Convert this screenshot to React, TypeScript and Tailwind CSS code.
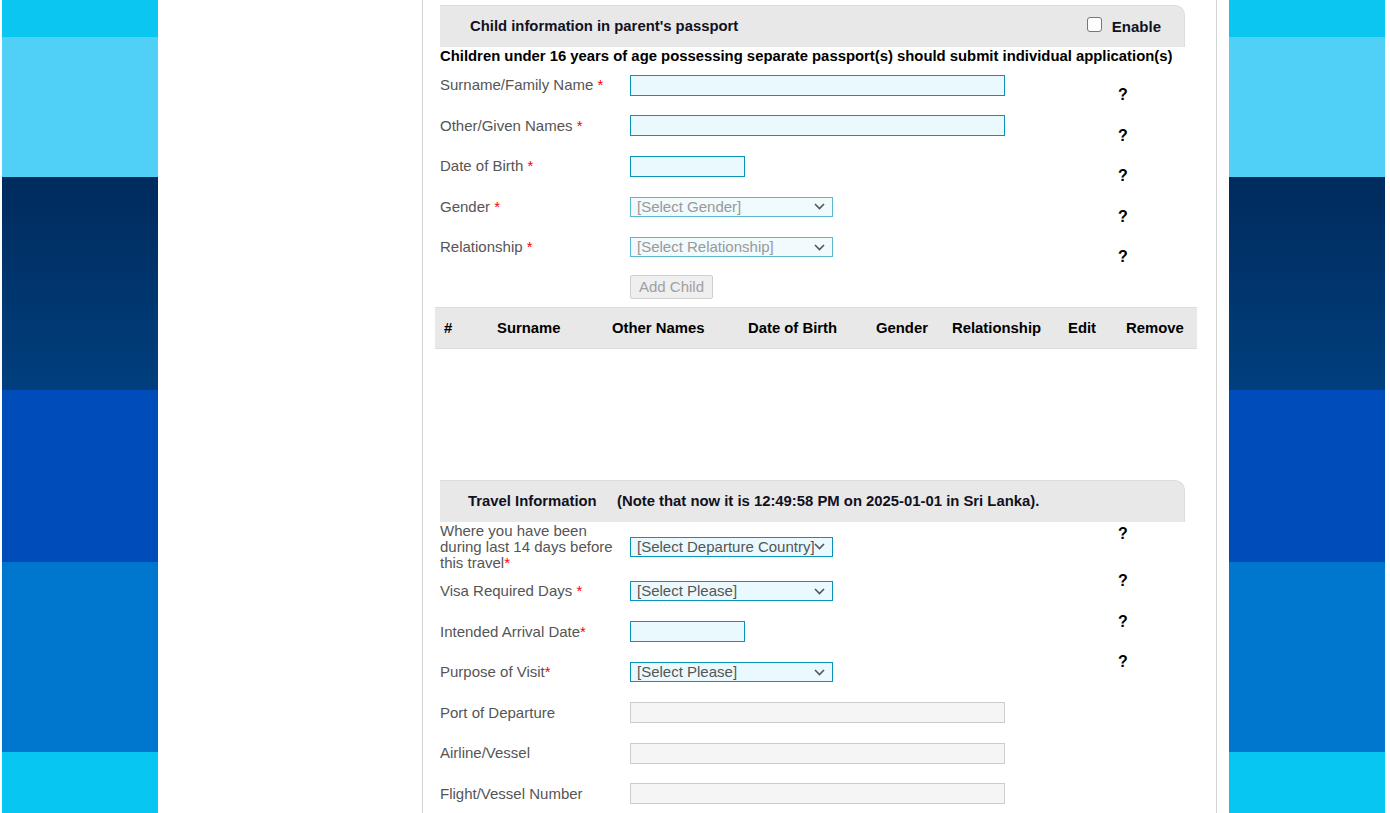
import React from "react";

const Star = () => <span className="text-[#ff0000]">*</span>;

const Chevron = () => (
  <svg width="11" height="7" viewBox="0 0 11 7" className="shrink-0">
    <polyline points="1,1 5.5,5.5 10,1" fill="none" stroke="#555" strokeWidth="1.6" />
  </svg>
);

const TextBox = ({ w = "w-[375px]" }: { w?: string }) => (
  <div className={`${w} h-[21px] border border-[#0a93b8] bg-[#eaf9fd]`} />
);

const GrayBox = () => (
  <div className="w-[375px] h-[21px] border border-[#cccccc] bg-[#f5f5f5]" />
);

const Select = ({ text, dim }: { text: string; dim?: boolean }) => (
  <div
    className={`w-[203px] h-[20px] flex items-center pl-[6px] pr-[7px] overflow-hidden ${
      dim ? "border border-[#5bb8d3] bg-[#f1fafd] text-[#999999]" : "border border-[#0a93b8] bg-[#eaf9fd] text-[#555555]"
    }`}
  >
    <span className="flex-1 min-w-0 whitespace-nowrap overflow-hidden leading-[18px] text-[15px]">{text}</span>
    <Chevron />
  </div>
);

const Help = ({ cls }: { cls: string }) => (
  <span className={`font-bold text-black text-[16px] leading-none ${cls}`}>?</span>
);

const Row = ({
  label,
  control,
  help,
  helpCls = "",
  h = "h-[40.5px]",
}: {
  label: React.ReactNode;
  control: React.ReactNode;
  help?: boolean;
  helpCls?: string;
  h?: string;
}) => (
  <div className={`flex items-center ${h}`}>
    <div className="w-[190px] text-[#555555] text-[15px] leading-[16px] pr-[14px]">{label}</div>
    <div className="w-[488px] flex items-center">{control}</div>
    {help && <Help cls={helpCls} />}
  </div>
);

const Stripe = () => (
  <div className="w-[156px] h-full flex flex-col shrink-0">
    <div className="h-[37px] bg-[#0ac6f1]" />
    <div className="h-[140px] bg-[#50d0f7]" />
    <div className="h-[213px] bg-gradient-to-b from-[#002b5d] to-[#003f7e]" />
    <div className="h-[172px] bg-[#004cbb]" />
    <div className="h-[190px] bg-[#0077cf]" />
    <div className="flex-1 bg-[#08c6f2]" />
  </div>
);

const cols = ["#", "Surname", "Other Names", "Date of Birth", "Gender", "Relationship", "Edit", "Remove"];

export default function App() {
  return (
    <div className="h-[813px] overflow-hidden bg-white flex font-['Liberation_Sans',Arial,sans-serif]">
      <div className="w-[2px] shrink-0" />
      <Stripe />
      <div className="w-[1071px] shrink-0 pl-[264px]">
        <div className="w-[795px] h-full border-x border-[#d3d3d3] pt-[5px]">
          {/* child section */}
          <div className="ml-[17px] w-[745px] h-[42px] bg-[#e8e8e8] border-t border-r border-[#dddddd] rounded-tr-[10px] flex items-center justify-between pl-[30px] pr-[23px]">
            <span className="font-bold text-[14.85px] text-[#111122]">Child information in parent's passport</span>
            <span className="flex items-center gap-[10px] mt-[2px]">
              <span className="w-[15px] h-[15px] rounded-[3px] border border-[#767676] bg-white -mt-[6px]" />
              <span className="font-bold text-[15px] text-[#111122]">Enable</span>
            </span>
          </div>
          <div className="ml-[17px] h-[18px] pt-[1px] font-bold text-[14.85px] leading-[17px] text-black whitespace-nowrap">
            Children under 16 years of age possessing separate passport(s) should submit individual application(s)
          </div>
          <div className="ml-[17px]">
            <Row label={<>Surname/Family Name <Star /></>} control={<TextBox />} help helpCls="mt-[20px]" />
            <Row label={<>Other/Given Names <Star /></>} control={<TextBox />} help helpCls="mt-[20px]" />
            <Row label={<>Date of Birth <Star /></>} control={<TextBox w="w-[115px]" />} help helpCls="mt-[20px]" />
            <Row label={<>Gender <Star /></>} control={<Select text="[Select Gender]" dim />} help helpCls="mt-[20px]" />
            <Row label={<>Relationship <Star /></>} control={<Select text="[Select Relationship]" dim />} help helpCls="mt-[20px]" />
            <Row
              h="h-[39.5px]"
              label=""
              control={
                <button className="w-[83px] h-[24px] border border-[#cfcfcf] rounded-[2px] bg-[#efefef] text-[#a0a0a0] text-[15px]">
                  Add Child
                </button>
              }
            />
          </div>
          <div className="ml-[12px] w-[762px] h-[42px] bg-[#e8e8e8] border-y border-[#dddddd] grid grid-cols-[53px_115px_136px_128px_76px_116px_58px_1fr] items-center pl-[9px]">
            {cols.map((c) => (
              <span key={c} className="font-bold text-[14.85px] text-black whitespace-nowrap">
                {c}
              </span>
            ))}
          </div>
          <div className="h-[131px]" />
          {/* travel section */}
          <div className="ml-[17px] w-[745px] h-[42px] bg-[#e8e8e8] border-t border-r border-[#dddddd] rounded-tr-[10px] flex items-center pl-[28px]">
            <span className="font-bold text-[14.85px] text-[#111122] w-[149px]">Travel Information</span>
            <span className="font-bold text-[14.85px] text-[#111122]">
              (Note that now it is 12:49:58 PM on 2025-01-01 in Sri Lanka).
            </span>
          </div>
          <div className="ml-[17px]">
            <Row
              h="h-[49px]"
              label={<>Where you have been during last 14 days before this travel<Star /></>}
              control={<Select text="[Select Departure Country]" />}
              help
              helpCls="self-start mt-[4px]"
            />
            <Row label={<>Visa Required Days <Star /></>} control={<Select text="[Select Please]" />} help helpCls="mb-[20px]" />
            <Row label={<>Intended Arrival Date<Star /></>} control={<TextBox w="w-[115px]" />} help helpCls="mb-[20px]" />
            <Row label={<>Purpose of Visit<Star /></>} control={<Select text="[Select Please]" />} help helpCls="mb-[20px]" />
            <Row label="Port of Departure" control={<GrayBox />} />
            <Row label="Airline/Vessel" control={<GrayBox />} />
            <Row label="Flight/Vessel Number" control={<GrayBox />} />
          </div>
        </div>
      </div>
      <Stripe />
    </div>
  );
}
